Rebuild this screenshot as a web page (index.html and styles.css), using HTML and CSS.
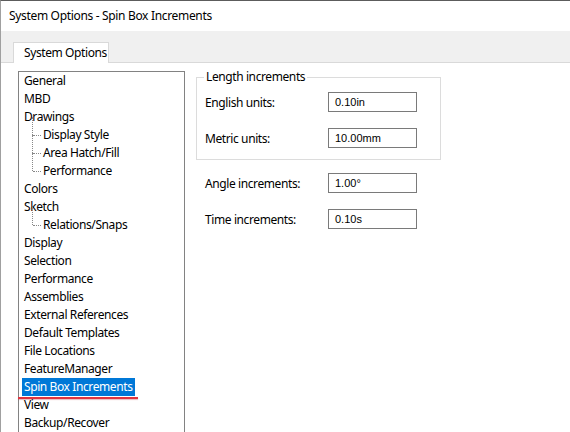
FILE: index.html
```html
<!DOCTYPE html>
<html>
<head>
<meta charset="utf-8">
<link rel="stylesheet" href="styles.css">
</head>
<body>
<div class="window">
  <div class="titlebar">System Options - Spin Box Increments</div>
  <div class="tabstrip">
    <div class="tab">System Options</div>
  </div>
  <div class="panel">
    <div class="tree">
      <div class="item">General</div>
      <div class="item">MBD</div>
      <div class="item">Drawings</div>
      <div class="item child">Display Style</div>
      <div class="item child">Area Hatch/Fill</div>
      <div class="item child last">Performance</div>
      <div class="item">Colors</div>
      <div class="item">Sketch</div>
      <div class="item child last">Relations/Snaps</div>
      <div class="item">Display</div>
      <div class="item">Selection</div>
      <div class="item">Performance</div>
      <div class="item">Assemblies</div>
      <div class="item">External References</div>
      <div class="item">Default Templates</div>
      <div class="item">File Locations</div>
      <div class="item">FeatureManager</div>
      <div class="item selected"><span class="sel">Spin Box Increments</span><span class="redline"></span></div>
      <div class="item">View</div>
      <div class="item">Backup/Recover</div>
    </div>
    <div class="options">
      <fieldset class="group">
        <legend class="legend">Length increments</legend>
        <div class="row"><span class="label">English units:</span><span class="input">0.10in</span></div>
        <div class="row"><span class="label">Metric units:</span><span class="input">10.00mm</span></div>
      </fieldset>
      <div class="plain">
        <div class="row"><span class="label">Angle increments:</span><span class="input">1.00°</span></div>
        <div class="row"><span class="label">Time increments:</span><span class="input">0.10s</span></div>
      </div>
    </div>
  </div>
</div>
</body>
</html>
```
FILE: styles.css
```css
html, body {
  margin: 0;
  padding: 0;
  background: #ffffff;
}
body {
  width: 570px;
  height: 432px;
  overflow: hidden;
  font-family: "Noto Sans", "Open Sans", sans-serif;
  font-size: 12px;
  letter-spacing: -0.4px;
  color: #000;
}
.window {
  height: 431px;
  border-top: 1px solid #5c5c5c;
  border-left: 1px solid #a0a0a0;
  display: flex;
  flex-direction: column;
}
.titlebar {
  height: 30px;
  line-height: 30px;
  padding-left: 8px;
  font-size: 12px;
  letter-spacing: -0.33px;
  background: #fff;
}
.tabstrip {
  height: 31px;
  background: #f0f0f0;
  border-bottom: 1px solid #d9d9d9;
  display: flex;
  align-items: flex-end;
  padding-left: 12px;
}
.tab {
  height: 20px;
  width: 84px;
  background: #fff;
  border: 1px solid #d9d9d9;
  border-bottom: none;
  margin-bottom: -1px;
  line-height: 20px;
  padding-left: 10px;
  box-sizing: content-box;
}
.panel {
  flex: 1;
  display: flex;
  padding: 8px 0 0 17px;
  overflow: hidden;
}
.tree {
  width: 165px;
  border: 1px solid #828282;
  border-bottom: none;
  flex-shrink: 0;
}
.item {
  height: 18px;
  line-height: 18px;
  padding-left: 5px;
  white-space: nowrap;
  position: relative;
}
.item.child {
  padding-left: 24px;
}
.item.child::before {
  content: "";
  position: absolute;
  left: 13px;
  top: -9px;
  height: 18px;
  border-left: 1px dotted #888;
}
.item.child::after {
  content: "";
  position: absolute;
  left: 14px;
  top: 9px;
  width: 8px;
  border-top: 1px dotted #888;
}
.item.selected {
  padding-left: 3px;
}
.sel {
  display: inline-block;
  background: #0078d7;
  color: #fff;
  padding: 0 2px;
  height: 18px;
}
.redline {
  position: absolute;
  left: -1px;
  top: 19px;
  width: 120px;
  height: 2px;
  background: #e0343f;
  box-shadow: 0 1px 1px rgba(200, 60, 70, 0.35);
}
.options {
  margin-left: 11px;
  margin-top: -1px;
}
.group {
  margin: 0;
  width: 235px;
  height: 80px;
  padding: 8px 0 0 8px;
  border: 1px solid #dcdcdc;
  box-sizing: content-box;
}
.legend {
  padding: 0 2px;
  margin-left: -1px;
  line-height: 14px;
}
.row {
  display: flex;
  align-items: center;
  height: 20px;
  margin-bottom: 16px;
}
.label {
  width: 123px;
}
.input {
  width: 81px;
  height: 18px;
  border: 1px solid #7a7a7a;
  padding-left: 6px;
  font-family: "Liberation Sans", Arial, sans-serif;
  font-size: 11px;
  letter-spacing: 0;
  line-height: 18px;
}
.plain {
  padding: 13px 0 0 9px;
}
```
